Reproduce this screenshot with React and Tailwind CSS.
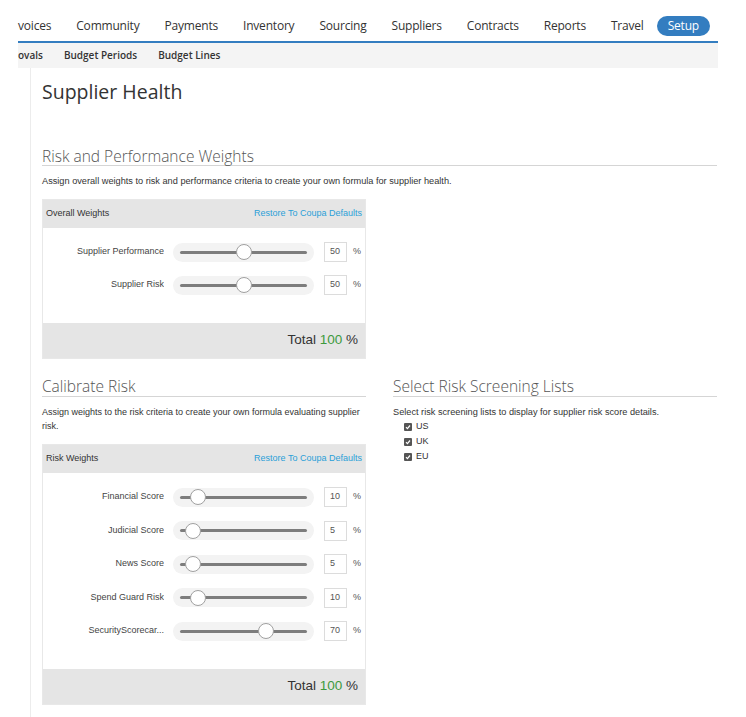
import React from 'react';

const navItems = ['Community', 'Payments', 'Inventory', 'Sourcing', 'Suppliers', 'Contracts', 'Reports', 'Travel'];

const overall = [
    { label: 'Supplier Performance', value: 50 },
    { label: 'Supplier Risk', value: 50 },
];

const risk = [
    { label: 'Financial Score', value: 10 },
    { label: 'Judicial Score', value: 5 },
    { label: 'News Score', value: 5 },
    { label: 'Spend Guard Risk', value: 10 },
    { label: 'SecurityScorecar...', value: 70 },
];

const arial = { fontFamily: '"Liberation Sans", Arial, sans-serif' };

function SliderRow({ label, value }) {
    return (
        <div className="flex items-center h-[20px]">
            <div className="w-[121px] text-right text-[9px] text-[#444] truncate">{label}</div>
            <div className="ml-[9px] w-[141px] h-[19px] rounded-full bg-[#f3f3f3] px-[7px] flex items-center">
                <div className="relative w-full h-[3px] rounded-full bg-[#7d7d7d]">
                    {/* thumb position comes from the value */}
                    <div
                        className="absolute top-1/2 -translate-y-1/2 w-[16px] h-[16px] rounded-full bg-white border border-[#a0a0a0]"
                        style={{ left: value * 1.13 - 1 }}
                    />
                </div>
            </div>
            <div className="ml-[10px] w-[23px] h-[20px] border border-[#dcdcdc] bg-white text-[9px] text-[#555] pl-[5px] flex items-center">
                {value}
            </div>
            <span className="ml-[6px] text-[9px] text-[#555]">%</span>
        </div>
    );
}

function WeightsPanel({ title, rows, gap }) {
    return (
        <div className="w-[324px] border border-[#e8e8e8]" style={arial}>
            <div className="h-[28px] bg-[#e5e5e5] flex items-center justify-between px-[3px] text-[9px]">
                <span className="text-[#333]">{title}</span>
                <span className="text-[#2ba0d8]">Restore To Coupa Defaults</span>
            </div>
            <div className={`pt-[14px] pb-[28px] flex flex-col ${gap}`}>
                {rows.map((r) => (
                    <SliderRow key={r.label} {...r} />
                ))}
            </div>
            <div className="h-[35px] bg-[#e5e5e5] flex items-center justify-end pr-[7px] text-[13.5px] text-[#333]">
                Total&nbsp;<span className="text-[#3d9a3d]">100</span>&nbsp;%
            </div>
        </div>
    );
}

function Check() {
    return (
        <span className="w-[8px] h-[8px] rounded-[1px] bg-[#555] flex items-center justify-center">
            <svg width="6" height="6" viewBox="0 0 6 6">
                <path d="M1 3.2 L2.4 4.6 L5 1.5" stroke="white" strokeWidth="1.2" fill="none" />
            </svg>
        </span>
    );
}

export default function App() {
    return (
        <div className="w-[746px] h-[717px] bg-white overflow-hidden" style={{ fontFamily: '"Open Sans", sans-serif' }}>
            {/* Top nav */}
            <div className="ml-[18px] w-[700px]">
                <div className="h-[41px] pt-[11px] flex items-center gap-[25px] text-[12px] text-[#333] tracking-[-0.2px] whitespace-nowrap">
                    <span>voices</span>
                    {navItems.map((n) => (
                        <span key={n}>{n}</span>
                    ))}
                    <span className="-ml-[12px] h-[20px] px-[11px] rounded-full bg-[#337dc0] text-white flex items-center">Setup</span>
                </div>
                <div className="h-[2px] bg-[#337dc0]" />
                <div className="h-[25px] bg-[#f4f4f4] flex items-center gap-[21px] text-[10px] font-semibold text-[#333] whitespace-nowrap">
                    <span>ovals</span>
                    <span>Budget Periods</span>
                    <span>Budget Lines</span>
                </div>
            </div>

            {/* Main */}
            <div className="ml-[30px] h-[649px] border-l border-[#ececec] pl-[11px] pt-[10px] w-[688px]">
                <h1 className="text-[19.5px] leading-[28px] text-[#333]">Supplier Health</h1>

                <h2 className="mt-[41px] text-[15.5px] leading-[18px] text-[#555] font-light border-b border-[#d5d5d5] w-[675px]">
                    Risk and Performance Weights
                </h2>
                <p className="mt-[8px] text-[9.2px] leading-[14px] text-[#333]" style={arial}>
                    Assign overall weights to risk and performance criteria to create your own formula for supplier health.
                </p>
                <div className="mt-[11px]">
                    <WeightsPanel title="Overall Weights" rows={overall} gap="gap-[13px]" />
                </div>

                <div className="mt-[17px] grid grid-cols-[324px_324px] gap-x-[27px]">
                    <div>
                        <h2 className="text-[15.5px] leading-[20px] text-[#555] font-light border-b border-[#d5d5d5]">Calibrate Risk</h2>
                        <p className="mt-[8px] text-[9px] leading-[14px] text-[#333]" style={arial}>
                            Assign weights to the risk criteria to create your own formula evaluating supplier risk.
                        </p>
                        <div className="mt-[11px]">
                            <WeightsPanel title="Risk Weights" rows={risk} gap="gap-[13.5px]" />
                        </div>
                    </div>
                    <div>
                        <h2 className="text-[15.5px] leading-[20px] text-[#555] font-light border-b border-[#d5d5d5]">Select Risk Screening Lists</h2>
                        <p className="mt-[8px] text-[9.2px] leading-[14px] text-[#333]" style={arial}>
                            Select risk screening lists to display for supplier risk score details.
                        </p>
                        <div className="ml-[11px] flex flex-col text-[9px] leading-[15px] text-[#333]" style={arial}>
                            {['US', 'UK', 'EU'].map((c) => (
                                <label key={c} className="flex items-center gap-[4px]">
                                    <Check />
                                    {c}
                                </label>
                            ))}
                        </div>
                    </div>
                </div>
            </div>
        </div>
    );
}
